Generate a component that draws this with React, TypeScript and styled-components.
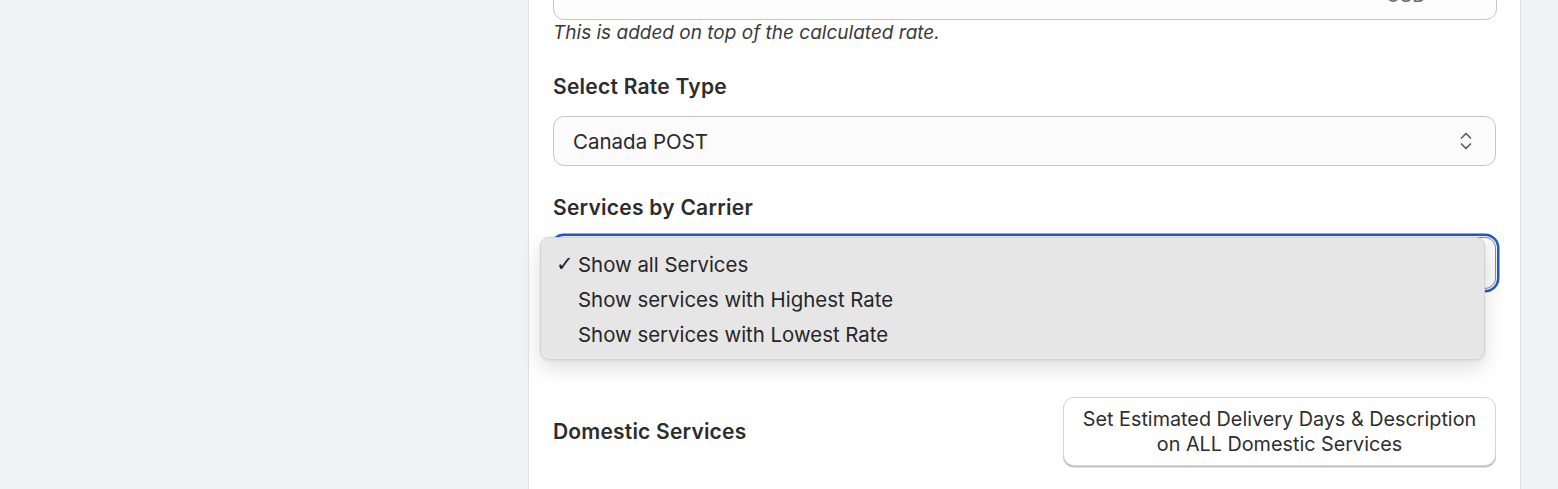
import React from 'react';
import styled, { createGlobalStyle } from 'styled-components';

const GlobalStyle = createGlobalStyle`
  html, body { margin: 0; padding: 0; }
  body {
    background: #f1f2f4;
    font-family: Inter, 'Noto Sans', sans-serif;
    color: #303030;
    overflow: hidden;
  }
`;

const SERVICE_OPTIONS = [
  'Show all Services',
  'Show services with Highest Rate',
  'Show services with Lowest Rate',
];

const UpDownIcon = () => (
  <svg width="16" height="22" viewBox="0 0 16 22" fill="none">
    <path d="M3.5 8 L8 3.5 L12.5 8" stroke="#5f5f5f" strokeWidth="1.7" strokeLinecap="round" strokeLinejoin="round" />
    <path d="M3.5 14 L8 18.5 L12.5 14" stroke="#5f5f5f" strokeWidth="1.7" strokeLinecap="round" strokeLinejoin="round" />
  </svg>
);

const App = () => {
  return (
    <Page>
      <GlobalStyle />
      <Rail />
      <Card>
        {/* 상단 - 잘려 보이는 추가 금액 입력 */}
        <Field>
          <TextInput>
            <Suffix>USD</Suffix>
          </TextInput>
          <Help>This is added on top of the calculated rate.</Help>
        </Field>

        <Field>
          <Label>Select Rate Type</Label>
          <Select>
            <span>Canada POST</span>
            <UpDownIcon />
          </Select>
        </Field>

        <Field>
          <Label>Services by Carrier</Label>
          <SelectWrap>
            <Select $focused />
            <Menu>
              {SERVICE_OPTIONS.map((opt, i) => (
                <MenuItem key={opt}>
                  <Check>{i === 0 ? '✓' : ''}</Check>
                  {opt}
                </MenuItem>
              ))}
            </Menu>
          </SelectWrap>
        </Field>

        <SectionRow>
          <SectionTitle>Domestic Services</SectionTitle>
          <Button>
            Set Estimated Delivery Days &amp; Description
            <br />
            on ALL Domestic Services
          </Button>
        </SectionRow>
      </Card>
      <Rail $grow />
    </Page>
  );
};

export default App;

// --- Styled Components ---

const Page = styled.div`
  display: flex;
  width: 1558px;
  height: 489px;
  overflow: hidden;
`;

const Rail = styled.div<{ $grow?: boolean }>`
  flex: ${p => (p.$grow ? '1' : '0 0 528px')};
  background: #f1f2f4;
`;

const Card = styled.div`
  width: 993px;
  flex: none;
  background: #fff;
  border-left: 1px solid #e1e2e4;
  border-right: 1px solid #e1e2e4;
  padding: 0 23px 0 24px;
  display: flex;
  flex-direction: column;
  box-sizing: border-box;
`;

const Field = styled.div`
  display: flex;
  flex-direction: column;
  &:first-child { margin-top: -30px; }
`;

const TextInput = styled.div`
  height: 50px;
  width: 944px;
  box-sizing: border-box;
  border: 1px solid #c4c6c9;
  border-radius: 11px;
  background: #fdfdfd;
  display: flex;
  justify-content: flex-end;
  align-items: flex-end;
  padding: 0 70px 14px 0;
`;

const Suffix = styled.span`
  font-size: 19px;
  color: #6b6b6b;
  line-height: 18px;
`;

const Help = styled.div`
  font-size: 19px;
  font-style: italic;
  line-height: 24px;
  color: #3a3a3a;
  margin-top: 1px;
`;

const Label = styled.div`
  font-size: 21px;
  font-weight: 600;
  letter-spacing: 0.25px;
  line-height: 24px;
  color: #2c2c2c;
  margin: 30px 0 17px;
`;

const SelectWrap = styled.div`
  position: relative;
  width: 944px;
`;

const Select = styled.div<{ $focused?: boolean }>`
  height: ${p => (p.$focused ? '52px' : '50px')};
  width: 943px;
  box-sizing: border-box;
  border: 1px solid ${p => (p.$focused ? '#8a8a8a' : '#c4c6c9')};
  border-radius: 11px;
  background: #fbfbfb;
  display: flex;
  align-items: center;
  justify-content: space-between;
  padding: 0 21px 0 19px;
  font-size: 20.5px;
  color: #2a2a2a;
  ${p => p.$focused && `
    box-shadow: 0 0 0 1px #f4f4f4, 0 0 0 3.5px #2359c4;
  `}
`;

const Menu = styled.div`
  position: absolute;
  top: 0;
  left: -13px;
  width: 945px;
  height: 123px;
  box-sizing: border-box;
  background: #e6e6e6;
  border: 1px solid #d3d3d3;
  border-radius: 9px;
  box-shadow: 0 8px 22px rgba(0, 0, 0, 0.13), 0 1px 3px rgba(0, 0, 0, 0.08);
  padding: 9px 0 0 16px;
`;

const MenuItem = styled.div`
  display: flex;
  align-items: center;
  height: 35px;
  font-size: 20.4px;
  color: #262626;
`;

const Check = styled.span`
  width: 22px;
  font-family: 'DejaVu Sans', sans-serif;
  font-weight: bold;
  font-size: 21px;
  line-height: 1;
  color: #1f1f1f;
  margin-left: -1px;
`;

const SectionRow = styled.div`
  display: flex;
  align-items: center;
  justify-content: space-between;
  margin-top: 108px;
  width: 944px;
`;

const SectionTitle = styled.div`
  font-size: 21px;
  font-weight: 600;
  letter-spacing: 0.2px;
  color: #2c2c2c;
`;

const Button = styled.button`
  width: 433px;
  height: 69px;
  border: 1px solid #d4d4d4;
  border-radius: 11px;
  background: #fff;
  box-shadow: 0 1.5px 0 #c2c2c2;
  font-family: Inter, 'Noto Sans', sans-serif;
  font-size: 19.8px;
  font-weight: 400;
  line-height: 25px;
  color: #2e2e2e;
  text-align: center;
  padding: 0;
  margin-right: 1px;
`;
